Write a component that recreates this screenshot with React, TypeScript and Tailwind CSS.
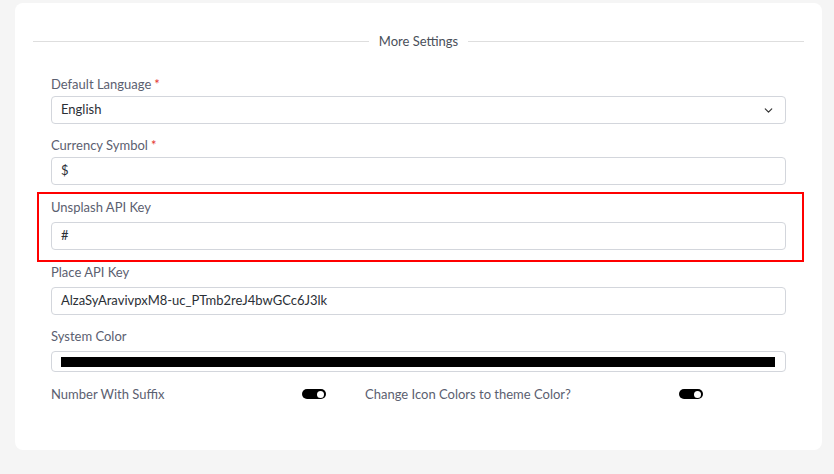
import { ChevronDown } from "lucide-react";

const Label = ({ text, required = false }: { text: string; required?: boolean }) => (
  <div className="h-[18px] text-[13px] leading-[18px] text-[#5b6070]">
    {text}
    {required && <span className="ml-[3px] text-[#e3342f]">*</span>}
  </div>
);

const Field = ({ value, chevron = false }: { value: string; chevron?: boolean }) => (
  <div className="flex h-[28px] items-center justify-between rounded-[4px] border border-[#d3d6dc] bg-white pr-[10px] pl-[9px] text-[13px] text-[#2b2f36]">
    <span>{value}</span>
    {chevron && <ChevronDown size={13} strokeWidth={2.2} className="text-[#333]" />}
  </div>
);

const Toggle = () => (
  <div className="flex h-[10px] w-[24px] items-center justify-end rounded-full bg-black pr-[2px]">
    <div className="h-[7px] w-[7px] rounded-full bg-white" />
  </div>
);

export default function App() {
  return (
    <div
      className="h-[474px] w-[834px] bg-[#f5f5f5] pt-[3px] pl-[15px]"
      style={{ fontFamily: "Lato, 'Noto Sans', sans-serif" }}
    >
      <div className="h-[447px] w-[807px] rounded-[8px] bg-white px-[18px] pt-[29px]">
        <div className="flex h-[18px] items-center gap-[10px]">
          <div className="h-px flex-1 bg-[#dedede]" />
          <span className="text-[13px] leading-[18px] text-[#4a4f5a]">More Settings</span>
          <div className="h-px flex-1 bg-[#dedede]" />
        </div>

        <div className="px-[18px]">
          <div className="mt-[25px]">
            <Label text="Default Language" required />
            <div className="mt-[3px]">
              <Field value="English" chevron />
            </div>
          </div>

          <div className="mt-[12px]">
            <Label text="Currency Symbol" required />
            <div className="mt-[3px]">
              <Field value="$" />
            </div>
          </div>

          <div className="mt-[7px] -mr-[18px] -ml-[14px] border-2 border-[#f00] pt-[4px] pr-[16px] pb-[10px] pl-[12px]">
            <Label text="Unsplash API Key" />
            <div className="mt-[6px]">
              <Field value="#" />
            </div>
          </div>

          <div className="mt-[1px]">
            <Label text="Place API Key" />
            <div className="mt-[6px]">
              <Field value="AlzaSyAravivpxM8-uc_PTmb2reJ4bwGCc6J3lk" />
            </div>
          </div>

          <div className="mt-[12px]">
            <Label text="System Color" />
            <div className="mt-[6px] flex h-[21px] items-center rounded-[4px] border border-[#d3d6dc] pr-[10px] pl-[9px]">
              <div className="h-[10px] flex-1 bg-black" />
            </div>
          </div>

          <div className="mt-[13px] flex h-[18px] items-center text-[13px] leading-[18px] text-[#5b6070]">
            <div className="flex w-[314px] items-center">
              <span className="w-[251px]">Number With Suffix</span>
              <Toggle />
            </div>
            <div className="flex items-center">
              <span className="w-[314px]">Change Icon Colors to theme Color?</span>
              <Toggle />
            </div>
          </div>
        </div>
      </div>
    </div>
  );
}
